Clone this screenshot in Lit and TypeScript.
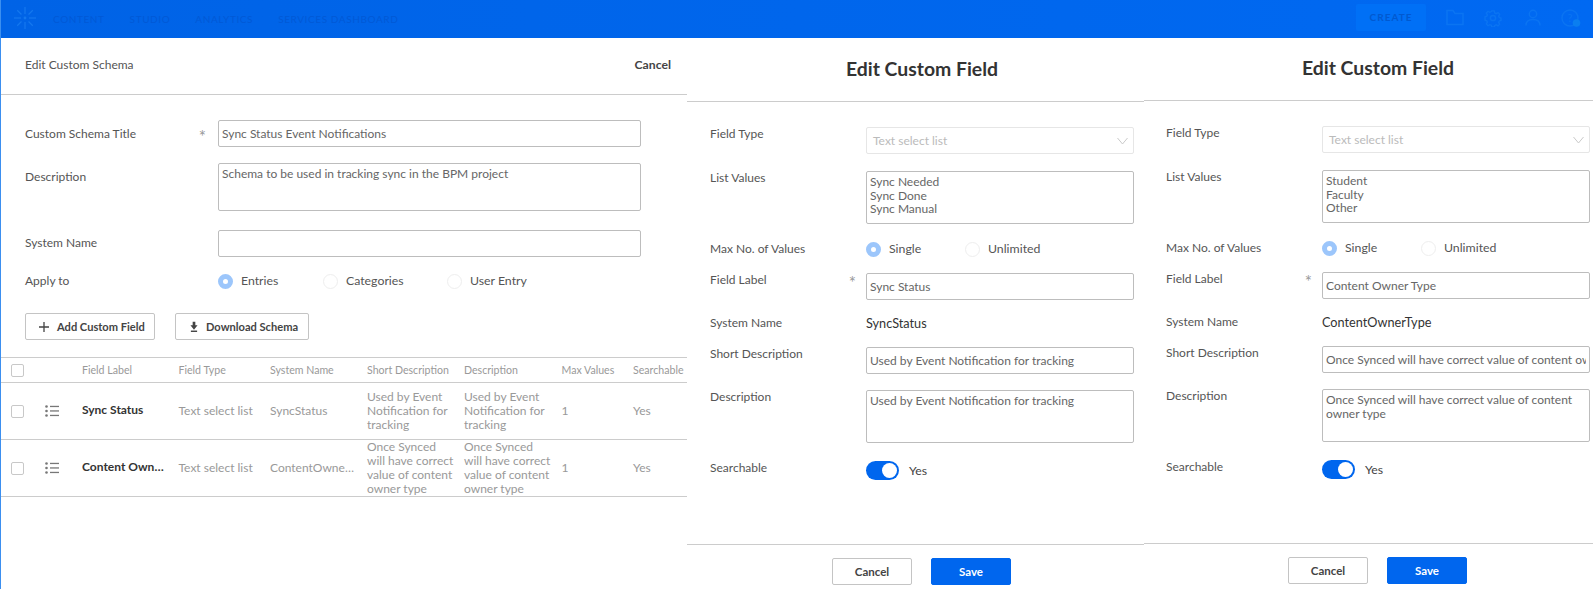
import { LitElement, html, css, svg } from "lit";
import { customElement, property } from "lit/decorators.js";

const FONT = css`"Lato", "Noto Sans", sans-serif`;

const chevron = html`<svg class="chev" width="11" height="8" viewBox="0 0 11 8"><path d="M.5 1 5.5 7 10.5 1" fill="none" stroke="#c9c9c9" stroke-width="1"/></svg>`;

@customElement("radio-opt")
class RadioOpt extends LitElement {
  @property({ type: Boolean }) checked = false;
  @property() label = "";
  static styles = css`
    :host { display: inline-flex; align-items: center; gap: 8px; color: #555; font: 12.3px/16px ${FONT}; }
    .dot { width: 15px; height: 15px; box-sizing: border-box; border-radius: 50%; border: 1px solid #eee; background: #fff; }
    .dot.on { border: 5px solid #9cc6fb; }
  `;
  render() {
    return html`<span class="dot ${this.checked ? "on" : ""}"></span><span>${this.label}</span>`;
  }
}

@customElement("field-panel")
class FieldPanel extends LitElement {
  @property() list = "";
  @property() label = "";
  @property() sys = "";
  @property() short = "";
  @property() desc = "";
  static styles = css`
    :host { display: block; box-sizing: border-box; font: 12px/14px ${FONT}; color: #555; background: #fff; }
    .head { height: 62px; box-sizing: border-box; border-bottom: 0; }
    .inner { width: 424px; margin-left: var(--pad, 22px); }
    .rule { height: 1px; background: #ccc; }
    h2 { margin: 0; font: 700 19.4px/60px ${FONT}; color: #333; text-align: center; }
    .form { display: flex; flex-direction: column; padding-top: 25px; }
    .row { display: grid; grid-template-columns: 156px 268px; align-items: start; }
    .row.mid { align-items: center; }
    .lab { display: flex; justify-content: space-between; padding-right: 10px; }
    .star { color: #999; font-size: 17px; padding-top: 3px; margin-bottom: -3px; }
    .box { box-sizing: border-box; border: 1px solid #bdbdbd; border-radius: 2px; padding: 0 3px; color: #666; background: #fff; }
    .one { height: 27px; line-height: 25px; }
    .one span { display: block; overflow: hidden; white-space: nowrap; }
    .area { height: 53px; padding-top: 3px; line-height: 14px; }
    .list { line-height: 13.5px; }
    .dis { height: 27px; border-color: #e6e6e6; color: #bbb; line-height: 25px; padding: 0 5px 0 6px; display: flex; justify-content: space-between; align-items: center; }
    .radios { display: flex; }
    .radios radio-opt:first-child { width: 99px; }
    .sys { color: #333; font-size: 12.7px; line-height: 20px; }
    .toggle { display: flex; align-items: center; gap: 10px; color: #444; font-size: 12.3px; }
    .sw { width: 33px; height: 19px; border-radius: 10px; background: #0066ee; display: flex; justify-content: flex-end; align-items: center; padding-right: 2px; box-sizing: border-box; }
    .sw i { width: 15px; height: 15px; border-radius: 50%; background: #fff; display: block; }
    .m13 { margin-top: 13px; } .m14 { margin-top: 14px; } .m16 { margin-top: 16px; }
    .m17 { margin-top: 17px; } .m18 { margin-top: 18px; }
    .foot { margin-top: 64px; }
    .btns { display: flex; justify-content: center; gap: 19px; padding: 13px 1px 0 0; box-sizing: border-box; }
    button { width: 80px; height: 27px; box-sizing: border-box; border-radius: 2px; font: 700 11.5px/25px ${FONT}; border: 1px solid #c4c4c4; background: #fff; color: #444; padding: 0; }
    button.pri { background: #0066ee; border-color: #0066ee; color: #fff; }
  `;
  render() {
    return html`
      <div class="inner head"><h2>Edit Custom Field</h2></div>
      <div class="rule"></div>
      <div class="inner form">
        <div class="row"><div class="lab">Field Type</div><div class="box dis"><span>Text select list</span>${chevron}</div></div>
        <div class="row m17"><div class="lab">List Values</div><div class="box area list">${this.list.split("|").map((l) => html`<div>${l}</div>`)}</div></div>
        <div class="row mid m17"><div class="lab">Max No. of Values</div><div class="radios"><radio-opt checked label="Single"></radio-opt><radio-opt label="Unlimited"></radio-opt></div></div>
        <div class="row m16"><div class="lab"><span>Field Label</span><span class="star">*</span></div><div class="box one"><span>${this.label}</span></div></div>
        <div class="row mid m13"><div class="lab">System Name</div><div class="sys">${this.sys}</div></div>
        <div class="row m14"><div class="lab">Short Description</div><div class="box one"><span>${this.short}</span></div></div>
        <div class="row m16"><div class="lab">Description</div><div class="box area">${this.desc}</div></div>
        <div class="row m18"><div class="lab">Searchable</div><div class="toggle"><span class="sw"><i></i></span><span>Yes</span></div></div>
      </div>
      <div class="rule foot"></div>
      <div class="inner btns"><button>Cancel</button><button class="pri">Save</button></div>
    `;
  }
}

const listIcon = html`<svg class="li" width="14" height="12" viewBox="0 0 14 12"><g fill="#777"><circle cx="1.5" cy="1.5" r="1.3"/><circle cx="1.5" cy="6" r="1.3"/><circle cx="1.5" cy="10.5" r="1.3"/><rect x="5" y="0.8" width="9" height="1.3"/><rect x="5" y="5.3" width="9" height="1.3"/><rect x="5" y="9.800" width="9" height="1.3"/></g></svg>`;

const rays = [0, 45, 90, 135, 180, 225, 270, 315].map(
  (a) => svg`<rect x="-0.6" y="-11" width="1.2" height="${a % 90 === 0 ? 7 : 6}" transform="rotate(${a})"/>`
);

@customElement("app-root")
class AppRoot extends LitElement {
  static styles = css`
    :host { display: block; width: 1593px; height: 589px; overflow: hidden; background: #fff; font: 12px/14px ${FONT}; color: #555; }
    .bar { height: 38px; display: flex; align-items: center; background: linear-gradient(90deg, #0063e6, #0069f2); border-left: 1px solid #3b8ff0; box-sizing: border-box; }
    .logo { margin-left: 13px; width: 22px; height: 22px; margin-top: -2px; }
    nav { display: flex; gap: 25px; margin-left: 17px; font: 400 10px/14px ${FONT}; letter-spacing: 0.6px; color: #0059d6; }
    .right { margin-left: auto; display: flex; align-items: center; }
    .create { width: 70px; height: 27px; margin-top: -3px; border-radius: 2px; background: #0070f6; color: #0059d0; font: 700 10px/27px ${FONT}; letter-spacing: 1px; text-align: center; }
    .right svg { display: block; }
    .ic-f { margin-left: 20px; margin-top: -3px; }
    .ic-g { margin-left: 20px; margin-top: -3px; }
    .ic-u { margin-left: 23px; margin-top: -3px; }
    .ic-h { margin-left: 20px; margin-top: -1px; margin-right: 12px; }
    .panes { display: flex; align-items: flex-start; }
    .main { width: 687px; flex: none; box-sizing: border-box; border-left: 1px solid #3b8ff0; height: 551px; overflow: hidden; }
    .mhead { height: 54px; border-bottom: 1px solid #ccc; display: flex; justify-content: space-between; align-items: center; padding: 0 16px 2px 24px; }
    .mhead b { font-weight: 700; font-size: 12.2px; color: #444; }
    .mform { padding: 25px 0 0 24px; }
    .r { display: grid; grid-template-columns: 193px 423px; align-items: center; }
    .r.top { align-items: start; }
    .r .l { display: flex; justify-content: space-between; padding-right: 12px; }
    .r .l.up { padding-bottom: 2px; }
    .star { color: #999; font-size: 17px; padding-top: 3px; margin-bottom: -3px; }
    .top .l { padding-top: 7px; }
    .in { box-sizing: border-box; height: 27px; border: 1px solid #bdbdbd; border-radius: 2px; padding: 0 3px; line-height: 25px; color: #666; }
    .ta { height: 48px; padding-top: 3px; line-height: 14px; }
    .mt16 { margin-top: 16px; } .mt19 { margin-top: 19px; }
    .opts { display: flex; }
    .opts radio-opt:nth-child(1) { width: 105px; }
    .opts radio-opt:nth-child(2) { width: 124px; }
    .acts { display: flex; gap: 20px; margin-top: 24px; }
    .btn { display: flex; align-items: center; height: 27px; box-sizing: border-box; border: 1px solid #c4c4c4; border-radius: 2px; font: 700 11.1px/25px ${FONT}; color: #444; gap: 8px; }
    .add { width: 130px; padding-left: 13px; }
    .dl { width: 134px; padding-left: 14px; }
    .table { margin-top: 17px; color: #999; }
    .tr { display: grid; grid-template-columns: 36.5px 44.5px 96.5px 91.5px 97px 97px 97.5px 71.5px 1fr; align-items: center; border-bottom: 1px solid #ccc; }
    .th { box-sizing: border-box; border-top: 1px solid #ccc; height: 26px; font-size: 10.6px; color: #999; }
    .td { height: 57px; box-sizing: border-box; }
    .cb { width: 13px; height: 13px; box-sizing: border-box; border: 1px solid #c8c8c8; border-radius: 2px; margin-left: 10px; background: #fff; }
    .li { display: block; margin-left: 7px; }
    .name { font-weight: 700; color: #333; margin-top: -2px; }
    .clip { overflow: hidden; white-space: nowrap; text-overflow: ellipsis; padding-right: 12px; }
    .wrap { padding-right: 9px; }
    .nowrap { white-space: nowrap; }
    .p2 { width: 457px; flex: none; padding-top: 1px; --pad: 23px; }
    .p3 { width: 449px; flex: none; --pad: 22px; }
  `;
  row(name: string, sys: string, text: string) {
    return html`<div class="tr td">
      <div class="cb"></div>
      <div>${listIcon}</div>
      <div class="name clip">${name}</div>
      <div>Text select list</div>
      <div class="clip">${sys}</div>
      <div class="wrap">${text}</div>
      <div class="wrap">${text}</div>
      <div>1</div>
      <div>Yes</div>
    </div>`;
  }
  render() {
    return html`
      <div class="bar">
        <svg class="logo" viewBox="-11 -11 22 22" fill="#1478ee"><circle r="1.4"/>${rays}</svg>
        <nav><span>CONTENT</span><span>STUDIO</span><span>ANALYTICS</span><span>SERVICES DASHBOARD</span></nav>
        <div class="right">
          <div class="create">CREATE</div>
          <svg class="ic-f" width="18" height="17" viewBox="0 0 18 17" fill="none" stroke="#0a74f2" stroke-width="1.5"><path d="M1 15.500V1.500h6l2 3h8v11z"/></svg>
          <svg class="ic-g" width="18" height="18" viewBox="0 0 18 18" fill="none" stroke="#0a74f2" stroke-width="1.5"><circle cx="9" cy="9" r="2.600"/><path d="M7.600 1h2.800l.5 2.300 1.700.8 2-1.200 1.900 2-1.200 2 .7 1.600 2 .6v2.600l-2 .6-.7 1.600 1.200 2-1.900 2-2-1.200-1.700.8-.5 1.600H7.600l-.5-1.900-1.700-.7-2 1.200-1.900-2 1.200-2-.7-1.600-2-.6V7.600l2-.6.7-1.600-1.200-2 1.900-2 2 1.200 1.700-.8z" transform="translate(1 1) scale(.89)"/></svg>
          <svg class="ic-u" width="16" height="17" viewBox="0 0 16 17" fill="none" stroke="#0a74f2" stroke-width="1.4"><circle cx="8" cy="5" r="3.700"/><path d="M1 16.500c0-4 3-6 7-6s7 2 7 6"/></svg>
          <svg class="ic-h" width="20" height="20" viewBox="0 0 20 20"><circle cx="9" cy="9" r="8" fill="none" stroke="#0a74f2" stroke-width="1.4"/><text x="9" y="13" font-size="11" text-anchor="middle" fill="#0a74f2" font-family="Lato, sans-serif">?</text><circle cx="15.500" cy="14" r="3.800" fill="#0a7ef0"/></svg>
        </div>
      </div>
      <div class="panes">
        <div class="main">
          <div class="mhead"><span>Edit Custom Schema</span><b>Cancel</b></div>
          <div class="mform">
            <div class="r"><div class="l"><span>Custom Schema Title</span><span class="star">*</span></div><div class="in">Sync Status Event Notifications</div></div>
            <div class="r top mt16"><div class="l">Description</div><div class="in ta">Schema to be used in tracking sync in the BPM project</div></div>
            <div class="r mt19"><div class="l up">System Name</div><div class="in"></div></div>
            <div class="r mt16"><div class="l">Apply to</div><div class="opts"><radio-opt checked label="Entries"></radio-opt><radio-opt label="Categories"></radio-opt><radio-opt label="User Entry"></radio-opt></div></div>
            <div class="acts">
              <div class="btn add"><svg width="10" height="10" viewBox="0 0 10 10"><path d="M5 0v10M0 5h10" stroke="#444" stroke-width="1.3"/></svg><span>Add Custom Field</span></div>
              <div class="btn dl"><svg width="8" height="12" viewBox="0 0 9 12" fill="#444"><path d="M3 0h3v4h2.500L4.500 9 .5 4H3z"/><rect x="1" y="10" width="7" height="1.600"/></svg><span>Download Schema</span></div>
            </div>
          </div>
          <div class="table">
            <div class="tr th">
              <div class="cb"></div><div></div>
              <div>Field Label</div><div>Field Type</div><div>System Name</div><div class="nowrap">Short Description</div><div>Description</div><div>Max Values</div><div class="nowrap">Searchable</div>
            </div>
            ${this.row("Sync Status", "SyncStatus", "Used by Event Notification for tracking")}
            ${this.row("Content Owner Type", "ContentOwnerType", "Once Synced will have correct value of content owner type")}
          </div>
        </div>
        <field-panel class="p2" list="Sync Needed|Sync Done|Sync Manual" label="Sync Status" sys="SyncStatus" short="Used by Event Notification for tracking" desc="Used by Event Notification for tracking"></field-panel>
        <field-panel class="p3" list="Student|Faculty|Other" label="Content Owner Type" sys="ContentOwnerType" short="Once Synced will have correct value of content owner type" desc="Once Synced will have correct value of content owner type"></field-panel>
      </div>
    `;
  }
}
